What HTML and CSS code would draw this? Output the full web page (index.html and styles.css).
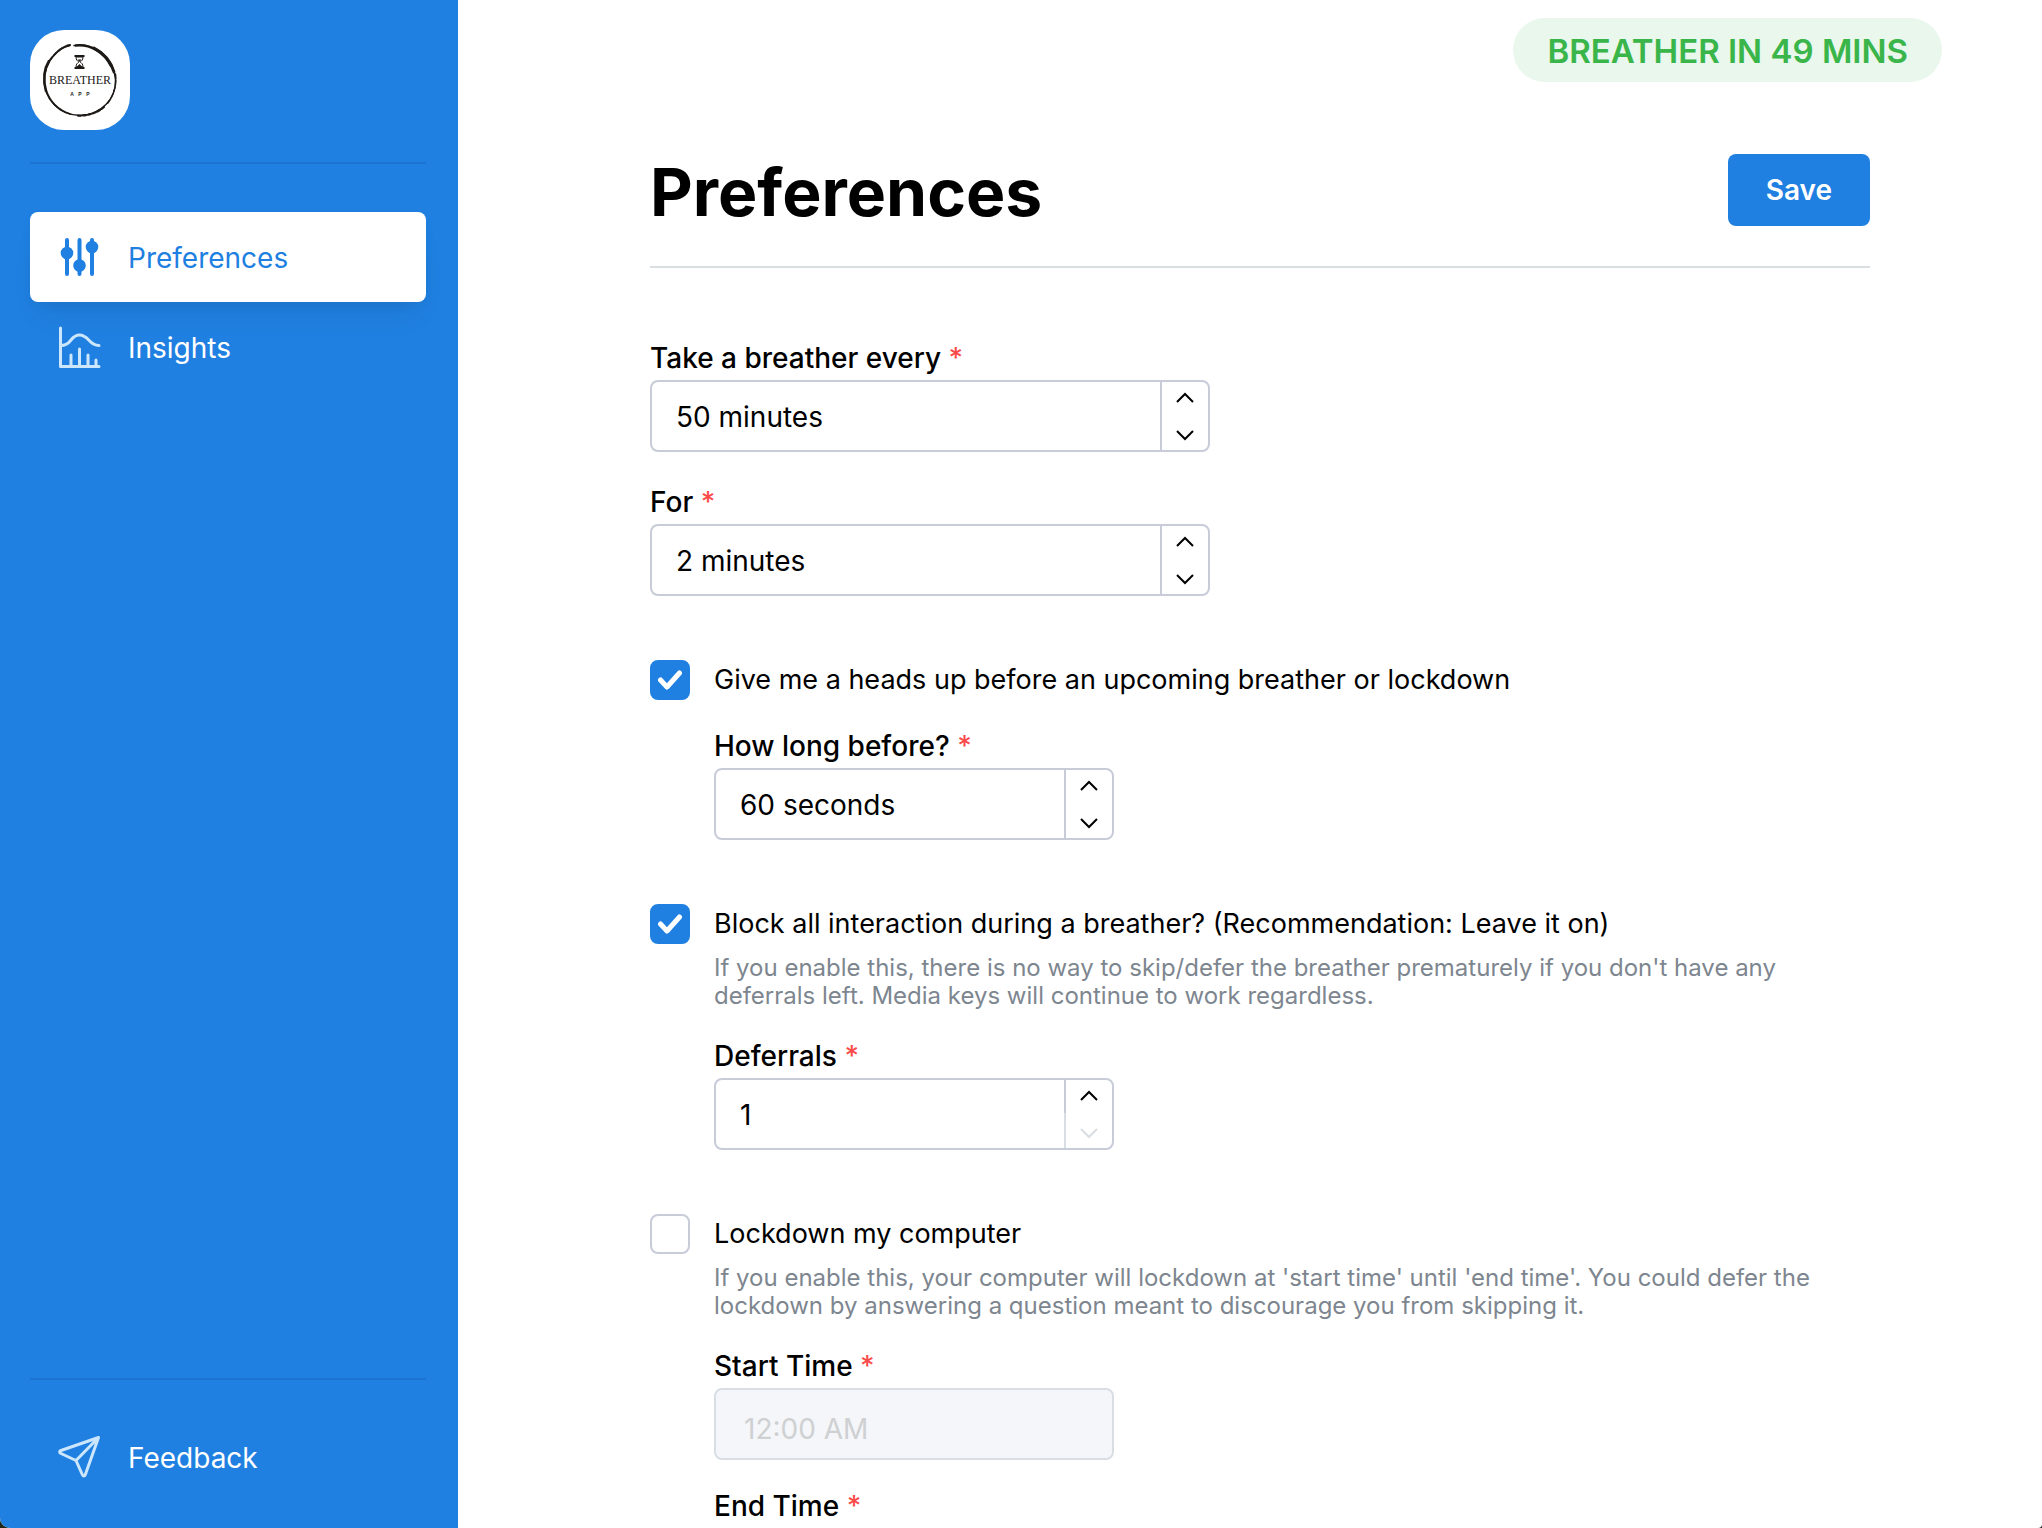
FILE: index.html
```html
<!DOCTYPE html>
<html lang="en">
<head>
    <meta charset="UTF-8">
    <meta name="viewport" content="width=device-width, initial-scale=1.0">
    <title>Breather</title>
    <link rel="stylesheet" href="styles.css">
</head>
<body>
<div class="app">
    <!-- Sidebar -->
    <aside class="sidebar">
        <div class="sidebar-top">
            <svg class="logo" viewBox="0 0 100 100" role="img" aria-label="Breather App">
                <rect width="100" height="100" rx="34" fill="#fff"/>
                <g fill="none" stroke="#1c1917" stroke-linecap="round">
                    <path d="M44 15.500C62 12 84 26 85.500 50C86 68 72 85 50 85.500C28 85 14 68 14.500 50C15 32 27 18 40 15.500" stroke-width="1.400"/>
                    <path d="M46 15.500C60 14 74 22 81 36" stroke-width="2.600"/>
                    <path d="M64 18C74 23 81 32 84 42" stroke-width="2.800"/>
                    <path d="M85.500 44C87 54 84 66 77 74" stroke-width="1.400" stroke-dasharray="5 1.500"/>
                    <path d="M19 31C14 39 13 50 16 61" stroke-width="2.600"/>
                    <path d="M16 60C20 72 28 80 40 84" stroke-width="1.800"/>
                    <path d="M74 77C66 84 56 86 46 85.500" stroke-width="2.200" stroke-dasharray="3 2"/>
                    <path d="M20 30C26 22 33 16 40 15" stroke-width="2" stroke-dasharray="4 1.600"/>
                </g>
                <g fill="#1c1917">
                    <path d="M44.500 25h10v2h-10zM44.500 37h10v2h-10z"/>
                    <path d="M46 27h7c0 3-1.500 4-2.800 5c1.300 1 2.800 2 2.800 5h-7c0-3 1.500-4 2.800-5c-1.300-1-2.800-2-2.800-5z" fill="none" stroke="#1c1917"/>
                    <path d="M47.500 29.500h4l-2 2.500zM46.500 37l3-3 3 3z"/>
                </g>
                <text class="logo-name" x="50" y="54" text-anchor="middle">BREATHER</text>
                <g class="logo-sub">
                    <text x="42" y="66" text-anchor="middle">A</text>
                    <text x="50" y="66" text-anchor="middle">P</text>
                    <text x="58" y="66" text-anchor="middle">P</text>
                </g>
            </svg>
        </div>
        <nav class="nav">
            <a class="nav-link active" href="#preferences">
                <svg class="icon" viewBox="0 0 40 40" fill="currentColor" stroke="currentColor" stroke-width="4" stroke-linecap="round">
                    <path d="M7 3v34M19.500 3v34M32 3v34"/>
                    <circle cx="7" cy="16" r="4.300"/>
                    <circle cx="19.500" cy="28.500" r="4.300"/>
                    <circle cx="32" cy="10" r="4.300"/>
                </svg>
                <span>Preferences</span>
            </a>
            <a class="nav-link" href="#insights">
                <svg class="icon" viewBox="0 0 40 40" fill="none" stroke="currentColor" stroke-width="3" stroke-linecap="round" stroke-linejoin="round">
                    <path d="M0.500 1v38.500h38.500"/>
                    <path d="M1 18.500c11 0 9-10.500 18.500-10.500s9 10.500 19.500 10.500"/>
                    <path d="M11 39v-11M19.500 39v-17M28 39v-11M36 39v-6"/>
                </svg>
                <span>Insights</span>
            </a>
        </nav>
        <div class="sidebar-bottom">
            <a class="nav-link" href="#feedback">
                <svg class="icon" viewBox="0 0 40 40" fill="none" stroke="currentColor" stroke-width="3" stroke-linejoin="round">
                    <path d="M38.500 0.500L1 13.500c-1.800 0.600-1.800 2.200 0 3L16 23.500L22.500 38c0.600 1.400 2.200 1.400 2.700 0zL16 23.500"/>
                </svg>
                <span>Feedback</span>
            </a>
        </div>
    </aside>

    <!-- Preferences form -->
    <main class="main">
        <div class="status"><span class="badge">Breather in 49 mins</span></div>
        <form class="content">
            <header class="page-header">
                <h1>Preferences</h1>
                <button class="save" type="button">Save</button>
            </header>

            <div class="field wide">
                <label for="every">Take a breather every <span class="required">*</span></label>
                <div class="number">
                    <input id="every" type="text" value="50 minutes">
                    <div class="steps">
                        <button type="button" aria-label="More"><svg viewBox="0 0 18 10"><path d="M1 9l8-8 8 8"/></svg></button>
                        <button type="button" aria-label="Less"><svg viewBox="0 0 18 10"><path d="M1 1l8 8 8-8"/></svg></button>
                    </div>
                </div>
            </div>

            <div class="field wide">
                <label for="for">For <span class="required">*</span></label>
                <div class="number">
                    <input id="for" type="text" value="2 minutes">
                    <div class="steps">
                        <button type="button" aria-label="More"><svg viewBox="0 0 18 10"><path d="M1 9l8-8 8 8"/></svg></button>
                        <button type="button" aria-label="Less"><svg viewBox="0 0 18 10"><path d="M1 1l8 8 8-8"/></svg></button>
                    </div>
                </div>
            </div>

            <section class="option">
                <div class="check">
                    <input id="headsup" type="checkbox" checked>
                    <svg class="tick" viewBox="0 0 24 20"><path d="M2.500 10l6.500 7L21.500 3"/></svg>
                </div>
                <div class="option-body">
                    <label class="option-label" for="headsup">Give me a heads up before an upcoming breather or lockdown</label>
                    <div class="field">
                        <label for="before">How long before? <span class="required">*</span></label>
                        <div class="number">
                            <input id="before" type="text" value="60 seconds">
                            <div class="steps">
                                <button type="button" aria-label="More"><svg viewBox="0 0 18 10"><path d="M1 9l8-8 8 8"/></svg></button>
                                <button type="button" aria-label="Less"><svg viewBox="0 0 18 10"><path d="M1 1l8 8 8-8"/></svg></button>
                            </div>
                        </div>
                    </div>
                </div>
            </section>

            <section class="option">
                <div class="check">
                    <input id="block" type="checkbox" checked>
                    <svg class="tick" viewBox="0 0 24 20"><path d="M2.500 10l6.500 7L21.500 3"/></svg>
                </div>
                <div class="option-body">
                    <label class="option-label" for="block">Block all interaction during a breather? (Recommendation: Leave it on)</label>
                    <p class="hint">If you enable this, there is no way to skip/defer the breather prematurely if you don't have any deferrals left. Media keys will continue to work regardless.</p>
                    <div class="field">
                        <label for="deferrals">Deferrals <span class="required">*</span></label>
                        <div class="number">
                            <input id="deferrals" type="text" value="1">
                            <div class="steps">
                                <button type="button" aria-label="More"><svg viewBox="0 0 18 10"><path d="M1 9l8-8 8 8"/></svg></button>
                                <button type="button" aria-label="Less" disabled><svg viewBox="0 0 18 10"><path d="M1 1l8 8 8-8"/></svg></button>
                            </div>
                        </div>
                    </div>
                </div>
            </section>

            <section class="option">
                <div class="check">
                    <input id="lockdown" type="checkbox">
                </div>
                <div class="option-body">
                    <label class="option-label" for="lockdown">Lockdown my computer</label>
                    <p class="hint">If you enable this, your computer will lockdown at 'start time' until 'end time'. You could defer the lockdown by answering a question meant to discourage you from skipping it.</p>
                    <div class="field">
                        <label for="start">Start Time <span class="required">*</span></label>
                        <input class="time" id="start" type="text" value="12:00 AM" disabled>
                    </div>
                    <div class="field">
                        <label for="end">End Time <span class="required">*</span></label>
                        <input class="time" id="end" type="text" disabled>
                    </div>
                </div>
            </section>
        </form>
    </main>
</div>
</body>
</html>
```
FILE: styles.css
```css
* {
    box-sizing: border-box;
}

html, body {
    height: 100%;
    margin: 0;
    overflow: hidden; /* Only the main column scrolls */
}

body {
    font-family: Inter, "Liberation Sans", sans-serif;
    font-size: 28px;
    line-height: 36px;
    color: #000;
    background-color: #1d2617; /* Shows behind the rounded window corners */
}

button, input {
    font: inherit;
    color: inherit;
}

.app {
    display: flex;
    height: 100%;
    border-radius: 0 0 4px 10px;
    overflow: hidden;
    background-color: #fff;
}

/* Sidebar */
.sidebar {
    display: flex;
    flex-direction: column;
    flex: 0 0 458px;
    padding: 30px 32px 26px 30px;
    background-color: #2080e1;
}

.sidebar-top {
    padding-bottom: 32px;
    margin-bottom: 48px;
    border-bottom: 2px solid #1c74d2;
}

.logo {
    display: block;
    width: 100px;
    height: 100px;
}

.logo-name {
    font: 12px "Liberation Serif", serif;
    fill: #1c1917;
}

.logo-sub {
    font: bold 5px "Liberation Sans", sans-serif;
    fill: #1c1917;
}

.nav {
    flex: 1;
}

.nav-link {
    display: flex;
    align-items: center;
    gap: 28px;
    height: 90px;
    padding: 0 30px;
    border-radius: 8px;
    color: #fff;
    text-decoration: none;
}

.nav-link span {
    padding-top: 2px;
}

.nav-link.active {
    background-color: #fff;
    color: #2080e1;
    box-shadow: 0 20px 30px -10px rgba(0, 0, 0, 0.08), 0 4px 12px rgba(0, 0, 0, 0.04);
}

.icon {
    width: 40px;
    height: 40px;
    overflow: visible;
    color: #cbe6fd;
}

.active .icon {
    color: #2080e1;
}

.sidebar-bottom {
    padding-top: 32px;
    border-top: 2px solid #1c74d2;
}

/* Main column */
.main {
    flex: 1;
    overflow-y: auto;
    scrollbar-width: none;
    padding: 18px 100px 64px 192px;
}

.status {
    display: flex;
    justify-content: flex-end;
}

.badge {
    height: 64px;
    padding: 1px 34px 0;
    border-radius: 32px;
    background-color: #e9f7ed;
    color: #3ab54a;
    font-size: 33px;
    font-weight: 600;
    line-height: 64px;
    text-transform: uppercase;
}

.content {
    margin-right: 72px;
}

.page-header {
    display: flex;
    align-items: center;
    justify-content: space-between;
    margin-top: 72px;
    padding-bottom: 40px;
    border-bottom: 2px solid #d9dee1;
    margin-bottom: 72px;
}

.page-header h1 {
    height: 72px;
    margin: 0;
    padding-top: 2px;
    font-size: 66px;
    line-height: 72px;
    font-weight: 700;
}

.save {
    height: 72px;
    padding: 0 38px;
    border: none;
    border-radius: 8px;
    background-color: #2080e1;
    color: #fff;
    font-weight: 600;
}

/* Fields */
.field {
    width: 400px;
    margin-top: 28px;
}

.field.wide {
    width: 560px;
    margin-top: 0;
    margin-bottom: 32px;
}

.field label {
    display: block;
    height: 40px;
    font-weight: 500;
}

.required {
    color: #fa4b4b;
}

.number {
    display: flex;
    height: 72px;
    border: 2px solid #c7ccd8;
    border-radius: 8px;
}

.number input {
    flex: 1;
    min-width: 0;
    padding: 2px 24px 0;
    border: none;
    background: none;
}

.steps {
    display: flex;
    flex-direction: column;
    width: 48px;
}

.steps button {
    flex: 1;
    display: flex;
    align-items: center;
    justify-content: center;
    padding: 0 0 2px;
    border: none;
    border-left: 2px solid #c7ccd8;
    background: none;
}

.steps button:last-child {
    padding: 4px 0 0;
}

.steps svg {
    width: 18px;
    height: 10px;
    overflow: visible;
    fill: none;
    stroke: currentColor;
    stroke-width: 2;
}

.steps button:disabled {
    color: #d9dee4;
    border-color: #d9dee4;
}

.time {
    display: block;
    width: 100%;
    height: 72px;
    padding: 10px 28px 0;
    border: 2px solid #d9dee4;
    border-radius: 8px;
    background-color: #f4f6f9;
    color: #cfd0d2;
}

/* Checkbox rows */
.option {
    display: flex;
    gap: 24px;
    margin-top: 64px;
}

.check {
    display: grid;
    width: 40px;
    height: 40px;
}

.check input,
.tick {
    grid-area: 1 / 1;
}

.check input {
    appearance: none;
    width: 40px;
    height: 40px;
    margin: 0;
    border: 2px solid #c7ccd8;
    border-radius: 8px;
    background-color: #fff;
}

.check input:checked {
    border-color: #2080e1;
    background-color: #2080e1;
}

.tick {
    place-self: center;
    width: 24px;
    height: 20px;
    fill: none;
    stroke: #fff;
    stroke-width: 5;
    stroke-linecap: round;
    stroke-linejoin: round;
    pointer-events: none;
}

.option-body {
    flex: 1;
}

.option-label {
    display: block;
    font-size: 27px;
    line-height: 40px;
}

.hint {
    margin: 10px 0 0;
    color: #7d868f;
    font-size: 24px;
    line-height: 28px;
}
```
